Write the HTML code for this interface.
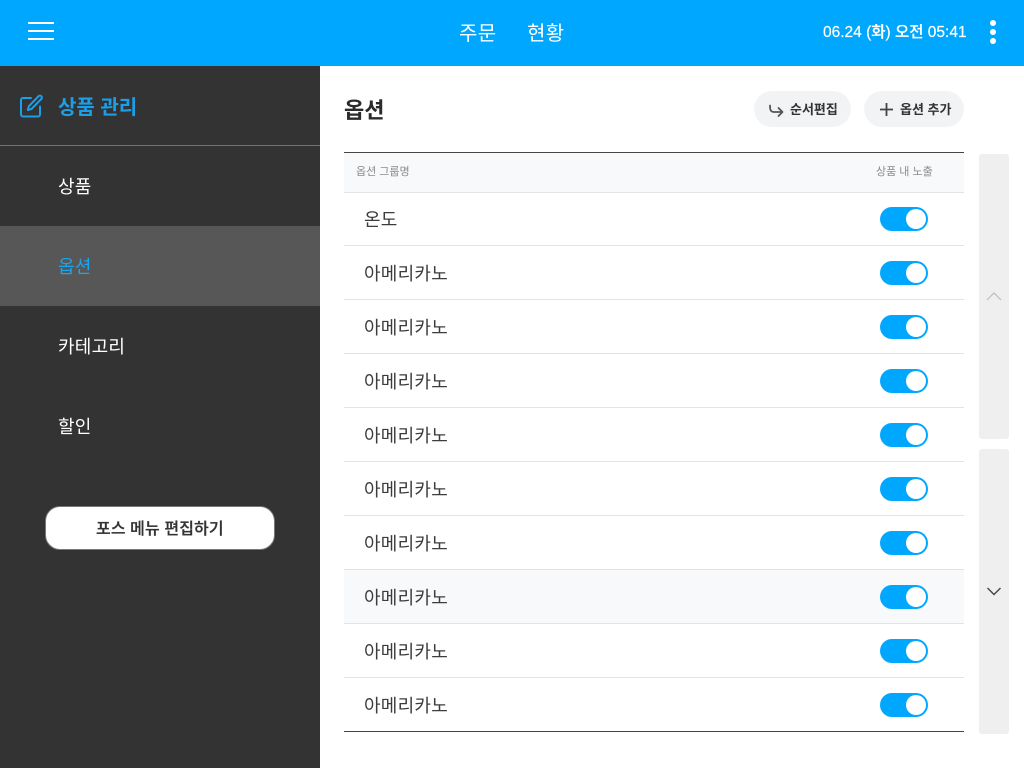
<!DOCTYPE html>
<html lang="ko">
<head>
<meta charset="utf-8">
<style>
html,body{margin:0;padding:0;width:1024px;height:768px;overflow:hidden;background:#fff}
body{position:relative;font-family:"Liberation Sans","Noto Sans CJK KR",sans-serif;color:#333}
div,span,svg{position:absolute}
.t{white-space:nowrap;line-height:24px;height:24px}
.row{left:344px;width:620px;height:53px;border-bottom:1px solid #e3e3e3}
.row .t{left:20px;top:16px;font-size:18px;color:#3c3c3c;letter-spacing:.25px}
.sw{left:536px;top:15px;width:48px;height:24px;border-radius:12px;background:#00a7ff}
.sw:after{content:"";position:absolute;left:26px;top:2px;width:20px;height:20px;border-radius:50%;background:#fff}
.m{left:58px;font-size:18px;color:#fff;letter-spacing:.25px}
</style>
</head>
<body>
<div style="left:0;top:0;width:1024px;height:66px;background:#00a7ff"></div>
<div style="left:28px;top:22px;width:26px;height:2px;background:#fff"></div>
<div style="left:28px;top:30px;width:26px;height:2px;background:#fff"></div>
<div style="left:28px;top:38px;width:26px;height:2px;background:#fff"></div>
<div class="t" style="left:459px;top:22px;font-size:20px;color:#fff;letter-spacing:.3px">주문</div>
<div class="t" style="left:527px;top:22px;font-size:20px;color:#fff;letter-spacing:.3px">현황</div>
<div class="t" style="left:823px;top:21px;font-size:15.500px;font-weight:500;color:#fff;-webkit-text-stroke:.2px #fff">06.24 (화) 오전 05:41</div>
<div style="left:990px;top:20px;width:6px;height:6px;border-radius:50%;background:#fff"></div>
<div style="left:990px;top:29px;width:6px;height:6px;border-radius:50%;background:#fff"></div>
<div style="left:990px;top:38px;width:6px;height:6px;border-radius:50%;background:#fff"></div>

<div style="left:0;top:66px;width:320px;height:702px;background:#333"></div>
<svg style="left:19px;top:94px" width="25" height="25" viewBox="0 0 25 25" fill="none" stroke="#1a9fe8" stroke-width="2" stroke-linecap="round" stroke-linejoin="round">
<path d="M12 4H4A2 2 0 0 0 2 6V20.500A2 2 0 0 0 4 22.500H19A2 2 0 0 0 21 20.500V12.500"/>
<path d="M19.500 2.200a1.900 1.900 0 0 1 2.800 2.800L12.500 15L8.800 16L9.800 12.300Z"/>
</svg>
<div class="t" style="left:58px;top:96px;font-size:20px;font-weight:700;color:#1a9fe8">상품 관리</div>
<div style="left:0;top:145px;width:320px;height:1px;background:#737373"></div>
<div class="t m" style="top:175px">상품</div>
<div style="left:0;top:226px;width:320px;height:80px;background:#575757"></div>
<div class="t m" style="top:255px;color:#1aa5ee">옵션</div>
<div class="t m" style="top:335px">카테고리</div>
<div class="t m" style="top:415px">할인</div>
<div style="left:45px;top:506px;width:228px;height:42px;background:#fff;border:1px solid #777;border-radius:15px"></div>
<div class="t" style="left:96px;top:518px;font-size:16px;font-weight:500;color:#333;letter-spacing:.1px;-webkit-text-stroke:.25px #333">포스 메뉴 편집하기</div>

<div class="t" style="left:344px;top:99px;font-size:22px;font-weight:700;color:#2b2b2b">옵션</div>
<div style="left:754px;top:91px;width:97px;height:36px;border-radius:18px;background:#f2f3f5"></div>
<svg style="left:767px;top:103px" width="18" height="16" viewBox="0 0 18 16" fill="none" stroke="#555" stroke-width="1.800" stroke-linecap="round" stroke-linejoin="round">
<path d="M3 2.500C3 6.500 3.500 9 7 9H15"/><path d="M11.500 5L15.500 9L11.500 13"/>
</svg>
<div class="t" style="left:790px;top:98px;font-size:13px;font-weight:700;color:#333">순서편집</div>
<div style="left:864px;top:91px;width:100px;height:36px;border-radius:18px;background:#f2f3f5"></div>
<svg style="left:879px;top:102px" width="15" height="15" viewBox="0 0 15 15" fill="none" stroke="#444" stroke-width="1.800"><path d="M7.500 1V14M1 7.500H14"/></svg>
<div class="t" style="left:900px;top:98px;font-size:13px;font-weight:700;color:#333">옵션 추가</div>

<div style="left:344px;top:152px;width:620px;height:1px;background:#444"></div>
<div style="left:344px;top:153px;width:620px;height:39px;background:#f8f9fa;border-bottom:1px solid #e3e3e3"></div>
<div class="t" style="left:356px;top:160px;font-size:11px;color:#8c8c8c">옵션 그룹명</div>
<div class="t" style="left:876px;top:160px;font-size:11px;color:#8c8c8c">상품 내 노출</div>

<div class="row" style="top:193px;height:52px"><div class="t" style="top:15px">온도</div><div class="sw" style="top:14px"></div></div>
<div class="row" style="top:246px"><div class="t">아메리카노</div><div class="sw"></div></div>
<div class="row" style="top:300px"><div class="t">아메리카노</div><div class="sw"></div></div>
<div class="row" style="top:354px"><div class="t">아메리카노</div><div class="sw"></div></div>
<div class="row" style="top:408px"><div class="t">아메리카노</div><div class="sw"></div></div>
<div class="row" style="top:462px"><div class="t">아메리카노</div><div class="sw"></div></div>
<div class="row" style="top:516px"><div class="t">아메리카노</div><div class="sw"></div></div>
<div class="row" style="top:570px;background:#f8f9fa"><div class="t">아메리카노</div><div class="sw"></div></div>
<div class="row" style="top:624px"><div class="t">아메리카노</div><div class="sw"></div></div>
<div class="row" style="top:678px;border-bottom-color:#444"><div class="t">아메리카노</div><div class="sw"></div></div>

<div style="left:979px;top:154px;width:30px;height:285px;background:#efefef;border-radius:3px"></div>
<svg style="left:985px;top:290px" width="18" height="12" viewBox="0 0 18 12" fill="none" stroke="#bdbdbd" stroke-width="1.200"><path d="M2 10L9 3L16 10"/></svg>
<div style="left:979px;top:449px;width:30px;height:285px;background:#efefef;border-radius:3px"></div>
<svg style="left:985px;top:586px" width="18" height="12" viewBox="0 0 18 12" fill="none" stroke="#444" stroke-width="1.400"><path d="M2.500 2L9 8.500L15.500 2"/></svg>
</body>
</html>
